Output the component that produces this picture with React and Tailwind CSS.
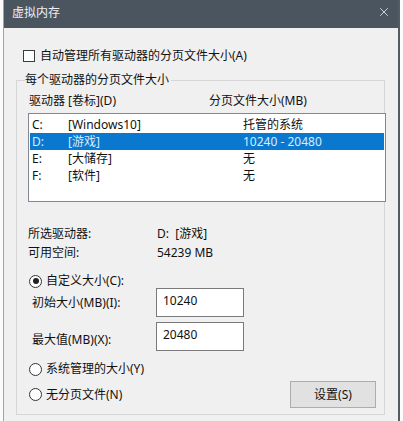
import { X } from 'lucide-react';

const font = { fontFamily: '"Noto Sans", "Noto Sans CJK SC", sans-serif' };

const drives = [
  { letter: 'C:', label: '[Windows10]', size: '托管的系统' },
  { letter: 'D:', label: '[游戏]', size: '10240 - 20480', selected: true },
  { letter: 'E:', label: '[大储存]', size: '无' },
  { letter: 'F:', label: '[软件]', size: '无' },
];

const Radio = ({ checked, label }) => (
  <div className="flex items-center h-[14px]">
    <span className="w-[13px] h-[13px] rounded-full border border-[#333] bg-white flex items-center justify-center">
      {checked && <span className="w-[6px] h-[6px] rounded-full bg-[#222]" />}
    </span>
    <span className="ml-[4px] leading-[14px]">{label}</span>
  </div>
);

const App = () => {
  return (
    <div className="w-[403px] h-[421px] bg-[#fbfbfb] pl-[3px] text-[12px] text-[#111]" style={font}>
      <div className="w-[397px] h-[421px] flex flex-col bg-[#f0f0f0] border-l border-[#a3a3a3] border-r-2 border-r-[#545b63]">
        {/* Title bar */}
        <div className="h-[28px] shrink-0 bg-[#4b5560] flex items-center justify-between pl-[8px] pr-[7px] text-[#eef0f2]">
          <span className="leading-[14px] -mt-[2px]">虚拟内存</span>
          <X size={14} strokeWidth={1.4} className="-mt-[4px]" />
        </div>

        {/* Auto manage checkbox */}
        <div className="flex items-center h-[14px] mt-[21px] pl-[19px]">
          <span className="w-[12px] h-[12px] border border-[#3c3c3c] bg-[#fbffff]" />
          <span className="ml-[5px] leading-[14px]">自动管理所有驱动器的分页文件大小(A)</span>
        </div>

        {/* Group box */}
        <div className="relative mt-[17px] ml-[12px] w-[369px] h-[335px] border border-[#d6d6d6]">
          <span className="absolute -top-[8px] left-[8px] leading-[14px] bg-[#f0f0f0] pr-[2px]">
            每个驱动器的分页文件大小
          </span>

          <div className="flex h-[14px] leading-[14px] mt-[13px] pl-[12px]">
            <span className="w-[180px]">驱动器 [卷标](D)</span>
            <span>分页文件大小(MB)</span>
          </div>

          {/* Drive list */}
          <div className="mt-[5px] ml-[11px] w-[358px] h-[89px] border border-[#828790] bg-white pt-[2px] px-[1px]">
            {drives.map((d) => (
              <div
                key={d.letter}
                className={`flex items-center h-[17px] pl-[2px] leading-[14px] ${
                  d.selected ? 'bg-[#0b78cf] text-[#d9ecfb]' : ''
                }`}
              >
                <span className="w-[36px]">{d.letter}</span>
                <span className="w-[175px]">{d.label}</span>
                <span>{d.size}</span>
              </div>
            ))}
          </div>

          {/* Selected drive info */}
          <div className="mt-[25px] pl-[11px] flex flex-col gap-[5px] leading-[14px]">
            <div className="flex h-[14px]">
              <span className="w-[129px]">所选驱动器:</span>
              <span>D:&nbsp;&nbsp;[游戏]</span>
            </div>
            <div className="flex h-[14px]">
              <span className="w-[129px]">可用空间:</span>
              <span>54239 MB</span>
            </div>
          </div>

          <div className="mt-[14px] pl-[12px]">
            <Radio checked label="自定义大小(C):" />
          </div>

          <div className="flex pl-[15px]">
            <span className="w-[124px] leading-[14px] pt-[8px]">初始大小(MB)(I):</span>
            <div className="w-[88px] h-[29px] border border-[#7a7a7a] bg-white pl-[6px] pt-[5px] leading-[14px]">
              10240
            </div>
          </div>
          <div className="flex mt-[5px] pl-[15px]">
            <span className="w-[124px] leading-[14px] pt-[11px]">最大值(MB)(X):</span>
            <div className="w-[88px] h-[29px] border border-[#7a7a7a] bg-white pl-[6px] pt-[5px] leading-[14px]">
              20480
            </div>
          </div>

          <div className="mt-[11px] pl-[12px]">
            <Radio label="系统管理的大小(Y)" />
          </div>

          <div className="mt-[5px] pl-[12px] pr-[8px] flex items-center justify-between h-[27px]">
            <Radio label="无分页文件(N)" />
            <button className="w-[86px] h-[27px] border border-[#adadad] bg-[#e1e1e1] leading-[14px]">
              设置(S)
            </button>
          </div>
        </div>
      </div>
    </div>
  );
};

export default App;
